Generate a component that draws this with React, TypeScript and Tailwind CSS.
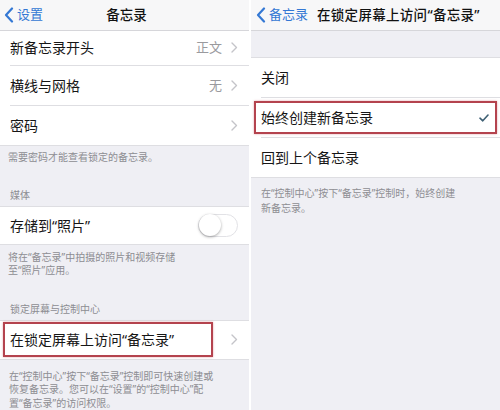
import React from "react";

const Chevron = () => (
  <svg width="7" height="11" viewBox="0 0 7 11" className="shrink-0">
    <path d="M1 1l4.5 4.5L1 10" fill="none" stroke="#c4c4c9" strokeWidth="1.4" strokeLinecap="round" strokeLinejoin="round" />
  </svg>
);

const Back = ({ label }: { label: string }) => (
  <div className="flex items-center gap-[3px] text-[13px] text-[#3478d4]">
    <svg width="10" height="16" viewBox="0 0 10 16">
      <path d="M8 1.5L2 8l6 6.5" fill="none" stroke="#3478d4" strokeWidth="2.2" strokeLinecap="round" strokeLinejoin="round" />
    </svg>
    <span>{label}</span>
  </div>
);

const Row = ({
  label,
  value,
  chevron,
  last,
  h,
}: {
  label: string;
  value?: string;
  chevron?: boolean;
  last?: boolean;
  h: string;
}) => (
  <div className={`ml-[10px] flex items-center pr-[11px] ${h} ${last ? "" : "border-b border-[#dedee2]"}`}>
    <span className="flex-1 text-[14px] text-[#161616]">{label}</span>
    {value && <span className="mr-[9px] text-[13px] text-[#9a9a9e]">{value}</span>}
    {chevron && <Chevron />}
  </div>
);

export default function App() {
  return (
    <div className="flex h-[410px] w-[500px] overflow-hidden bg-[#efeff4] font-['Noto_Sans','Noto_Sans_CJK_SC',sans-serif]">
      {/* Left panel */}
      <div className="flex w-[249px] flex-col">
        <div className="grid h-[31px] grid-cols-[1fr_auto_1fr] items-center border-b border-[#d6d6da] bg-[#f7f7f8] pl-[4px]">
          <Back label="设置" />
          <span className="text-[13.5px] font-medium text-[#111]">备忘录</span>
          <span />
        </div>
        <div className="border-b border-[#dedee2] bg-white">
          <Row label="新备忘录开头" value="正文" chevron h="h-[35px]" />
          <Row label="横线与网格" value="无" chevron h="h-[40px]" />
          <Row label="密码" chevron last h="h-[39px]" />
        </div>
        <div className="flex h-[60px] flex-col px-[8px] pt-[5px] text-[10px] leading-[13px] text-[#8d8d92]">
          <span>需要密码才能查看锁定的备忘录。</span>
          <span className="mt-auto mb-[4px] pl-[2px]">媒体</span>
        </div>
        <div className="flex h-[39px] items-center border-y border-[#dedee2] bg-white pl-[10px] pr-[11px]">
          <span className="flex-1 text-[14px] text-[#161616]">存储到“照片”</span>
          <div className="flex h-[23px] w-[40px] items-center rounded-full border border-[#e2e2e6] bg-white">
            <div className="h-[22px] w-[22px] rounded-full bg-white shadow-[0_1px_3px_rgba(0,0,0,0.35)]" />
          </div>
        </div>
        <div className="flex h-[75px] flex-col px-[8px] pt-[6px] text-[10px] leading-[13px] text-[#8d8d92]">
          <span>
            将在“备忘录”中拍摄的照片和视频存储
            <br />
            至“照片”应用。
          </span>
          <span className="mt-auto mb-[4px] pl-[2px]">锁定屏幕与控制中心</span>
        </div>
        <div className="relative flex h-[40px] items-center border-y border-[#dedee2] bg-white pl-[10px] pr-[11px]">
          <span className="flex-1 text-[14px] text-[#161616]">在锁定屏幕上访问“备忘录”</span>
          <Chevron />
          <div className="absolute left-[3px] top-[1px] h-[35px] w-[210px] border-2 border-[#b4434e] shadow-[0_0_2px_rgba(200,80,90,0.5)]" />
        </div>
        <div className="px-[9px] pt-[10px] text-[10px] leading-[13.5px] text-[#8d8d92]">
          在“控制中心”按下“备忘录”控制即可快速创建或
          <br />
          恢复备忘录。您可以在“设置”的“控制中心”配
          <br />
          置“备忘录”的访问权限。
        </div>
      </div>

      {/* Right panel */}
      <div className="flex flex-1 flex-col border-l-2 border-white">
        <div className="flex h-[31px] items-center gap-[9px] border-b border-[#d6d6da] bg-[#f7f7f8] pl-[5px]">
          <Back label="备忘录" />
          <span className="text-[13.5px] font-medium tracking-[0.3px] text-[#111]">在锁定屏幕上访问“备忘录”</span>
        </div>
        <div className="h-[27px] border-b border-[#dedee2]" />
        <div className="border-b border-[#dedee2] bg-white">
          <div className="ml-[10px] flex h-[40px] items-center border-b border-[#dedee2]">
            <span className="text-[14px] text-[#161616]">关闭</span>
          </div>
          <div className="relative ml-[10px] flex h-[40px] items-center border-b border-[#dedee2] pr-[11px]">
            <span className="flex-1 text-[14px] text-[#161616]">始终创建新备忘录</span>
            <svg width="10" height="8" viewBox="0 0 10 8">
              <path d="M1 4.2l2.8 2.6L9 1" fill="none" stroke="#3d5f73" strokeWidth="1.6" strokeLinecap="round" strokeLinejoin="round" />
            </svg>
            <div className="absolute left-[-7px] top-[3px] h-[33px] w-[243px] border-2 border-[#b4434e] shadow-[0_0_2px_rgba(200,80,90,0.5)]" />
          </div>
          <div className="ml-[10px] flex h-[39px] items-center">
            <span className="text-[14px] text-[#161616]">回到上个备忘录</span>
          </div>
        </div>
        <div className="px-[10px] pt-[8px] text-[10px] leading-[15px] text-[#8d8d92]">
          在“控制中心”按下“备忘录”控制时，始终创建
          <br />
          新备忘录。
        </div>
      </div>
    </div>
  );
}
